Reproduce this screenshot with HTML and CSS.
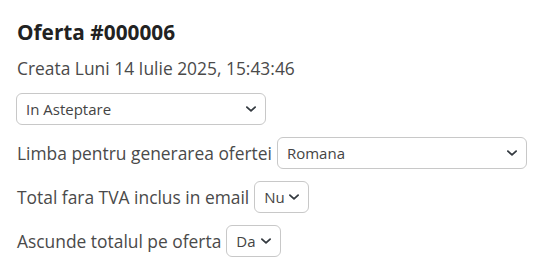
FILE: index.html
```html
<!DOCTYPE html>
<html lang="ro">
<head>
<meta charset="utf-8">
<link rel="stylesheet" href="styles.css">
</head>
<body>
<div class="page">
  <h2 class="title">Oferta #000006</h2>
  <p class="created">Creata Luni 14 Iulie 2025, 15:43:46</p>
  <div class="row row-status">
    <select class="sel sel-status"><option>In Asteptare</option></select>
  </div>
  <div class="row">
    <label class="lbl">Limba pentru generarea ofertei</label>
    <select class="sel sel-lang"><option>Romana</option></select>
  </div>
  <div class="row">
    <label class="lbl">Total fara TVA inclus in email</label>
    <select class="sel sel-small"><option>Nu</option></select>
  </div>
  <div class="row">
    <label class="lbl">Ascunde totalul pe oferta</label>
    <select class="sel sel-small"><option>Da</option></select>
  </div>
</div>
</body>
</html>
```
FILE: styles.css
```css
* { box-sizing: border-box; }
html, body { margin: 0; padding: 0; background: #fff; }
body { font-family: "Open Sans", sans-serif; color: #444; }
.page { padding: 18px 16px 0 17px; display: flex; flex-direction: column; align-items: flex-start; }
.title { margin: 0; font-size: 20.8px; font-weight: 700; color: #222; line-height: 28px; }
.created { margin: 10px 0 0 0; font-size: 17.4px; line-height: 24px; color: #4a4a4a; }
.row { display: flex; align-items: center; gap: 5px; margin-top: 12px; }
.row-status { margin-top: 13px; margin-left: -1px; }
.lbl { font-size: 17.4px; line-height: 24px; color: #4a4a4a; }
.sel {
  -webkit-appearance: none; appearance: none;
  font-family: "Open Sans", sans-serif; font-size: 15px; color: #444;
  height: 32px; border: 1px solid #c8c8c8; border-radius: 6px; background-color: #fff;
  padding: 0 26px 0 9px;
  background-image: url("data:image/svg+xml,%3Csvg xmlns='http://www.w3.org/2000/svg' viewBox='0 0 16 16'%3E%3Cpath fill='none' stroke='%23343a40' stroke-linecap='round' stroke-linejoin='round' stroke-width='2.4' d='M2.5 5.5l5.5 5 5.5-5'/%3E%3C/svg%3E");
  background-repeat: no-repeat; background-position: right 8px center; background-size: 12px 12px;
}
.sel-status { width: 250px; }
.sel-lang { width: 250px; }
.sel-small { width: 55px; padding-right: 18px; }
```
